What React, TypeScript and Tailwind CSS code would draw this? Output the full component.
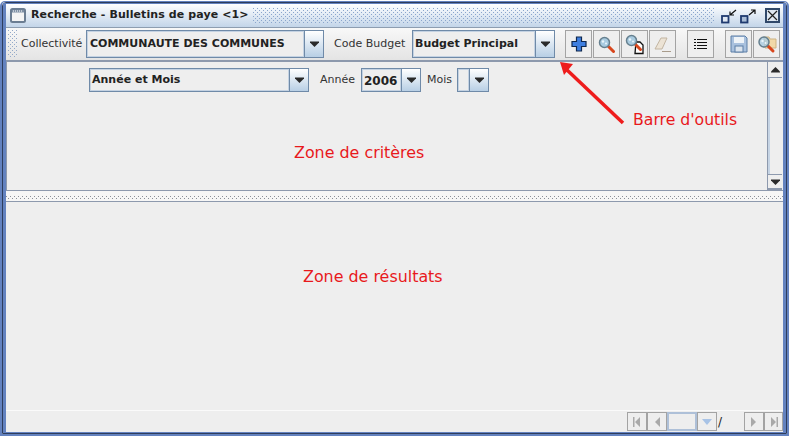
function Arrow() {
  return (
    <svg width="9" height="6" viewBox="0 0 9 6">
      <path d="M0 0.500h9v1L4.500 6 0 1.500z" fill="#2a2a2a" />
    </svg>
  );
}

// petite trame de points des barres java
function Dots({ id, color, pitch = 2, r = 1 }: { id: string; color: string; pitch?: number; r?: number }) {
  return (
    <svg width="100%" height="100%" className="block">
      <defs>
        <pattern id={id} width={pitch * 2} height={pitch * 2} patternUnits="userSpaceOnUse">
          <rect x="0" y="0" width={r} height={r} fill={color} />
          <rect x={pitch} y={pitch} width={r} height={r} fill={color} />
        </pattern>
      </defs>
      <rect width="100%" height="100%" fill={`url(#${id})`} />
    </svg>
  );
}

function Combo({ text, w, h = 28, pad = "pl-[1px]", size = "text-[11px]" }: { text: string; w: string; h?: number; pad?: string; size?: string }) {
  return (
    <div className={`flex shrink-0 border border-[#6f8aa8] ${w}`} style={{ height: h }}>
      <div className={`flex-1 min-w-0 flex items-center pt-[1px] bg-[#eeeeee] border border-[#c4d2e2] font-bold text-[#222] whitespace-nowrap overflow-hidden ${pad} ${size}`}>
        {text}
      </div>
      <div className="w-[19px] shrink-0 flex items-center justify-center border-l border-[#6f8aa8] bg-gradient-to-b from-white to-[#b8cfe5]">
        <Arrow />
      </div>
    </div>
  );
}

function ToolButton({ children }: { children: React.ReactNode }) {
  return (
    <div className="w-[27px] h-[28px] border border-[#a3a3a3] flex items-center justify-center bg-[#eeeeee]">
      {children}
    </div>
  );
}

function Lens({ cx, cy, opacity = 1 }: { cx: number; cy: number; opacity?: number }) {
  return (
    <g>
      <path d={`M${cx + 4} ${cy + 4}l5 5`} stroke="#d8461c" strokeWidth="3" strokeLinecap="round" />
      <circle cx={cx} cy={cy} r="5" fill="#a9cbe0" fillOpacity={opacity} stroke="#66808f" strokeWidth="1.500" />
      <circle cx={cx - 1.500} cy={cy - 1} r="1.200" fill="#eaf5fb" />
      <circle cx={cx + 1.500} cy={cy + 1} r="1" fill="#eaf5fb" />
    </g>
  );
}

function NavButton({ d }: { d: string }) {
  return (
    <div className="w-[20px] h-[19px] shrink-0 border border-[#a3a3a3] flex items-center justify-center">
      <svg width="8" height="10" viewBox="0 0 8 10">
        <path d={d} fill="#a9a9a9" />
      </svg>
    </div>
  );
}

export default function App() {
  return (
    <div className="relative w-[790px] h-[437px] bg-white overflow-hidden font-['DejaVu_Sans',sans-serif]">
      <div className="w-[789px] h-[435px] mt-[1px] border-t border-b-[2px] border-x-[2px] border-[#6382bf] rounded-t-[5px]">
        <div className="h-full border border-[#2e3d5c] rounded-t-[4px]">
          <div className="h-full flex flex-col border-y border-x-[3px] border-[#6382bf]">
            {/* titre */}
            <div className="h-[24px] shrink-0 flex items-center pl-[4px] bg-gradient-to-b from-white to-[#c3d5e9] border-b border-[#8d9db0]">
              <svg width="16" height="15" viewBox="0 0 16 15" className="shrink-0">
                <rect x="1" y="1" width="14" height="13" rx="1.500" fill="#f4f4f4" stroke="#6b7d92" strokeWidth="2" />
                <rect x="2" y="2" width="12" height="2.500" fill="#7f90a5" />
                <path d="M3 3h1M5 3h1M7 3h1M9 3h1M11 3h1" stroke="#fff" />
              </svg>
              <span className="ml-[5px] w-[217px] shrink-0 text-[11px] tracking-[0.1px] font-bold text-[#222] whitespace-nowrap">Recherche - Bulletins de paye &lt;1&gt;</span>
              <div className="w-[462px] h-[16px] ml-[5px] shrink-0">
                <Dots id="titre" color="#8aa5cc" />
              </div>
              <svg width="36" height="16" viewBox="0 0 36 16" className="ml-[6px] shrink-0">
                <rect x="1" y="8" width="6.500" height="6.500" fill="#dfe7f2" stroke="#1f3a6f" strokeWidth="1.800" />
                <path d="M15 2L9 7M9 3.500V7h4" stroke="#111" fill="none" strokeWidth="1.200" />
                <rect x="20" y="8" width="6.500" height="6.500" fill="#a9bcd6" stroke="#1f3a6f" strokeWidth="1.800" />
                <path d="M28 7l6-5M30 2h4v4" stroke="#111" fill="none" strokeWidth="1.200" />
              </svg>
              <div className="w-[15px] h-[15px] ml-[8px] mr-[3px] border-[2px] border-[#30486a] bg-[#dfe8f2] flex items-center justify-center shrink-0">
                <svg width="11" height="11" viewBox="0 0 11 11">
                  <path d="M1 1l9 9M10 1L1 10" stroke="#222" strokeWidth="1.200" />
                </svg>
              </div>
            </div>
            {/* barre d'outils */}
            <div className="h-[34px] shrink-0 flex items-center pl-[2px] bg-gradient-to-b from-[#f8f8f8] to-[#e4e4e4] border-b-[2px] border-[#8d99ad] text-[11px] text-[#333]">
              <div className="w-[9px] h-[28px] shrink-0">
                <Dots id="poignee" color="#93a9c9" />
              </div>
              <span className="ml-[4px] w-[65px] shrink-0">Collectivité</span>
              <Combo text="COMMUNAUTE DES COMMUNES" w="w-[238px]" pad="pl-[2px]" />
              <span className="ml-[10px] w-[78px] shrink-0 whitespace-nowrap">Code Budget</span>
              <Combo text="Budget Principal" w="w-[143px]" />
              <div className="flex ml-[10px] gap-[1px]">
                <ToolButton>
                  <svg width="16" height="16" viewBox="0 0 16 16">
                    <path d="M5.500 1h5v4.500h4.500v5h-4.500v4.500h-5v-4.500h-4.500v-5h4.500z" fill="#3f7fe0" stroke="#10284f" strokeWidth="1.200" />
                  </svg>
                </ToolButton>
                <ToolButton>
                  <svg width="17" height="17" viewBox="0 0 17 17"><Lens cx={6.500} cy={6.500} /></svg>
                </ToolButton>
                <ToolButton>
                  <svg width="20" height="21" viewBox="0 0 20 21">
                    <path d="M11 8h4l3 3v8.500h-8z" fill="#fff" stroke="#111" strokeWidth="1.300" />
                    <Lens cx={6.500} cy={6.500} />
                  </svg>
                </ToolButton>
                <ToolButton>
                  <svg width="19" height="18" viewBox="0 0 19 18">
                    <path d="M2 14L8 3h6L9 14z" fill="#ece3d5" stroke="#c2b5a2" />
                    <path d="M9 16.500h9" stroke="#a99c8c" />
                  </svg>
                </ToolButton>
              </div>
              <div className="ml-[11px]">
                <ToolButton>
                  <svg width="13" height="12" viewBox="0 0 13 12">
                    <path d="M3 1.500h10M3 4.500h10M3 7.500h10M3 10.500h10" stroke="#111" />
                    <path d="M0 1.500h2M0 4.500h2M0 7.500h2M0 10.500h2" stroke="#111" />
                  </svg>
                </ToolButton>
              </div>
              <div className="flex ml-[11px] gap-[1px]">
                <ToolButton>
                  <svg width="18" height="18" viewBox="0 0 18 18">
                    <path d="M1 1h14l2 2v14H1z" fill="#a9c1de" stroke="#5c7fa6" />
                    <rect x="4" y="2" width="10" height="6" fill="#eef3f8" />
                    <rect x="5" y="11" width="8" height="6" fill="#dbe4ee" stroke="#5c7fa6" />
                  </svg>
                </ToolButton>
                <ToolButton>
                  <svg width="20" height="20" viewBox="0 0 20 20">
                    <path d="M7 3h5l1 2h6v9H8z" fill="#f1d9a8" stroke="#cdb383" />
                    <Lens cx={7} cy={8} opacity={0.8} />
                  </svg>
                </ToolButton>
              </div>
            </div>
            {/* zone de critères */}
            <div className="h-[128px] shrink-0 flex bg-[#eeeeee]">
              <div className="flex-1 flex items-start pt-[6px] pl-[82px] text-[11px] text-[#333] border-l border-[#8d99ad]">
                <Combo text="Année et Mois" w="w-[220px]" h={24} />
                <span className="ml-[11px] mt-[4px] w-[41px] shrink-0">Année</span>
                <Combo text="2006" w="w-[60px]" h={24} size="text-[12px]" />
                <span className="ml-[6px] mt-[4px] w-[30px] shrink-0">Mois</span>
                <Combo text="" w="w-[32px]" h={24} />
              </div>
              <div className="w-[15px] shrink-0 flex flex-col border-l border-[#8d99ad] mr-[1px] bg-[#eeeeee]">
                <div className="h-[16px] flex items-center justify-center border-b border-[#8d99ad]">
                  <svg width="9" height="6" viewBox="0 0 9 6" className="rotate-180"><path d="M0 0.500h9v1L4.500 6 0 1.500z" fill="#2a2a2a" /></svg>
                </div>
                <div className="flex-1 border-l-[2px] border-[#c6d4e4]" />
                <div className="h-[16px] flex items-center justify-center border-t border-[#8d99ad] border-b-[2px]">
                  <Arrow />
                </div>
              </div>
            </div>
            {/* séparateur */}
            <div className="h-[12px] shrink-0 flex items-center border-y border-[#8d99ad] bg-[#f6f6f6]">
              <div className="w-full h-[3px] mt-[2px]">
                <Dots id="separateur" color="#8a8f98" />
              </div>
            </div>
            {/* zone de résultats */}
            <div className="flex-1 bg-[#eeeeee]" />
            {/* pied */}
            <div className="h-[22px] shrink-0 flex items-center justify-end bg-[#eeeeee] border-t border-[#fafafa]">
              <NavButton d="M0 0h1.500v10H0zM7 0v10L2 5z" />
              <NavButton d="M7 0v10L2 5z" />
              <div className="w-[30px] h-[19px] shrink-0 border-[2px] border-[#aec0d8] bg-[#eeeeee]" />
              <div className="w-[20px] h-[19px] shrink-0 border border-[#a3a3a3] flex items-center justify-center">
                <svg width="10" height="6" viewBox="0 0 10 6"><path d="M0 0h10L5 6z" fill="#a8c3e6" /></svg>
              </div>
              <span className="w-[27px] pl-[1px] shrink-0 text-[12px] text-[#222]">/</span>
              <NavButton d="M1 0v10l5-5z" />
              <div className="w-[19px] h-[19px] shrink-0 border border-[#a3a3a3] flex items-center justify-center">
                <svg width="8" height="10" viewBox="0 0 8 10"><path d="M1 0v10l5-5zM6.500 0H8v10H6.500z" fill="#a9a9a9" /></svg>
              </div>
            </div>
          </div>
        </div>
      </div>

      {/* annotations */}
      <span className="absolute left-[294px] top-[141px] text-[15.900px] text-[#e8191c] whitespace-nowrap">Zone de critères</span>
      <span className="absolute left-[303px] top-[265px] text-[15.900px] text-[#e8191c] whitespace-nowrap">Zone de résultats</span>
      <span className="absolute left-[633px] top-[108px] text-[15.700px] text-[#e8191c] whitespace-nowrap">Barre d'outils</span>
      <svg className="absolute left-[555px] top-[58px]" width="75" height="70" viewBox="0 0 75 70">
        <path d="M68 65L11 11" stroke="#ee1c1c" strokeWidth="3.500" />
        <path d="M5 4l13 2-9 11z" fill="#ee1c1c" />
      </svg>
    </div>
  );
}
